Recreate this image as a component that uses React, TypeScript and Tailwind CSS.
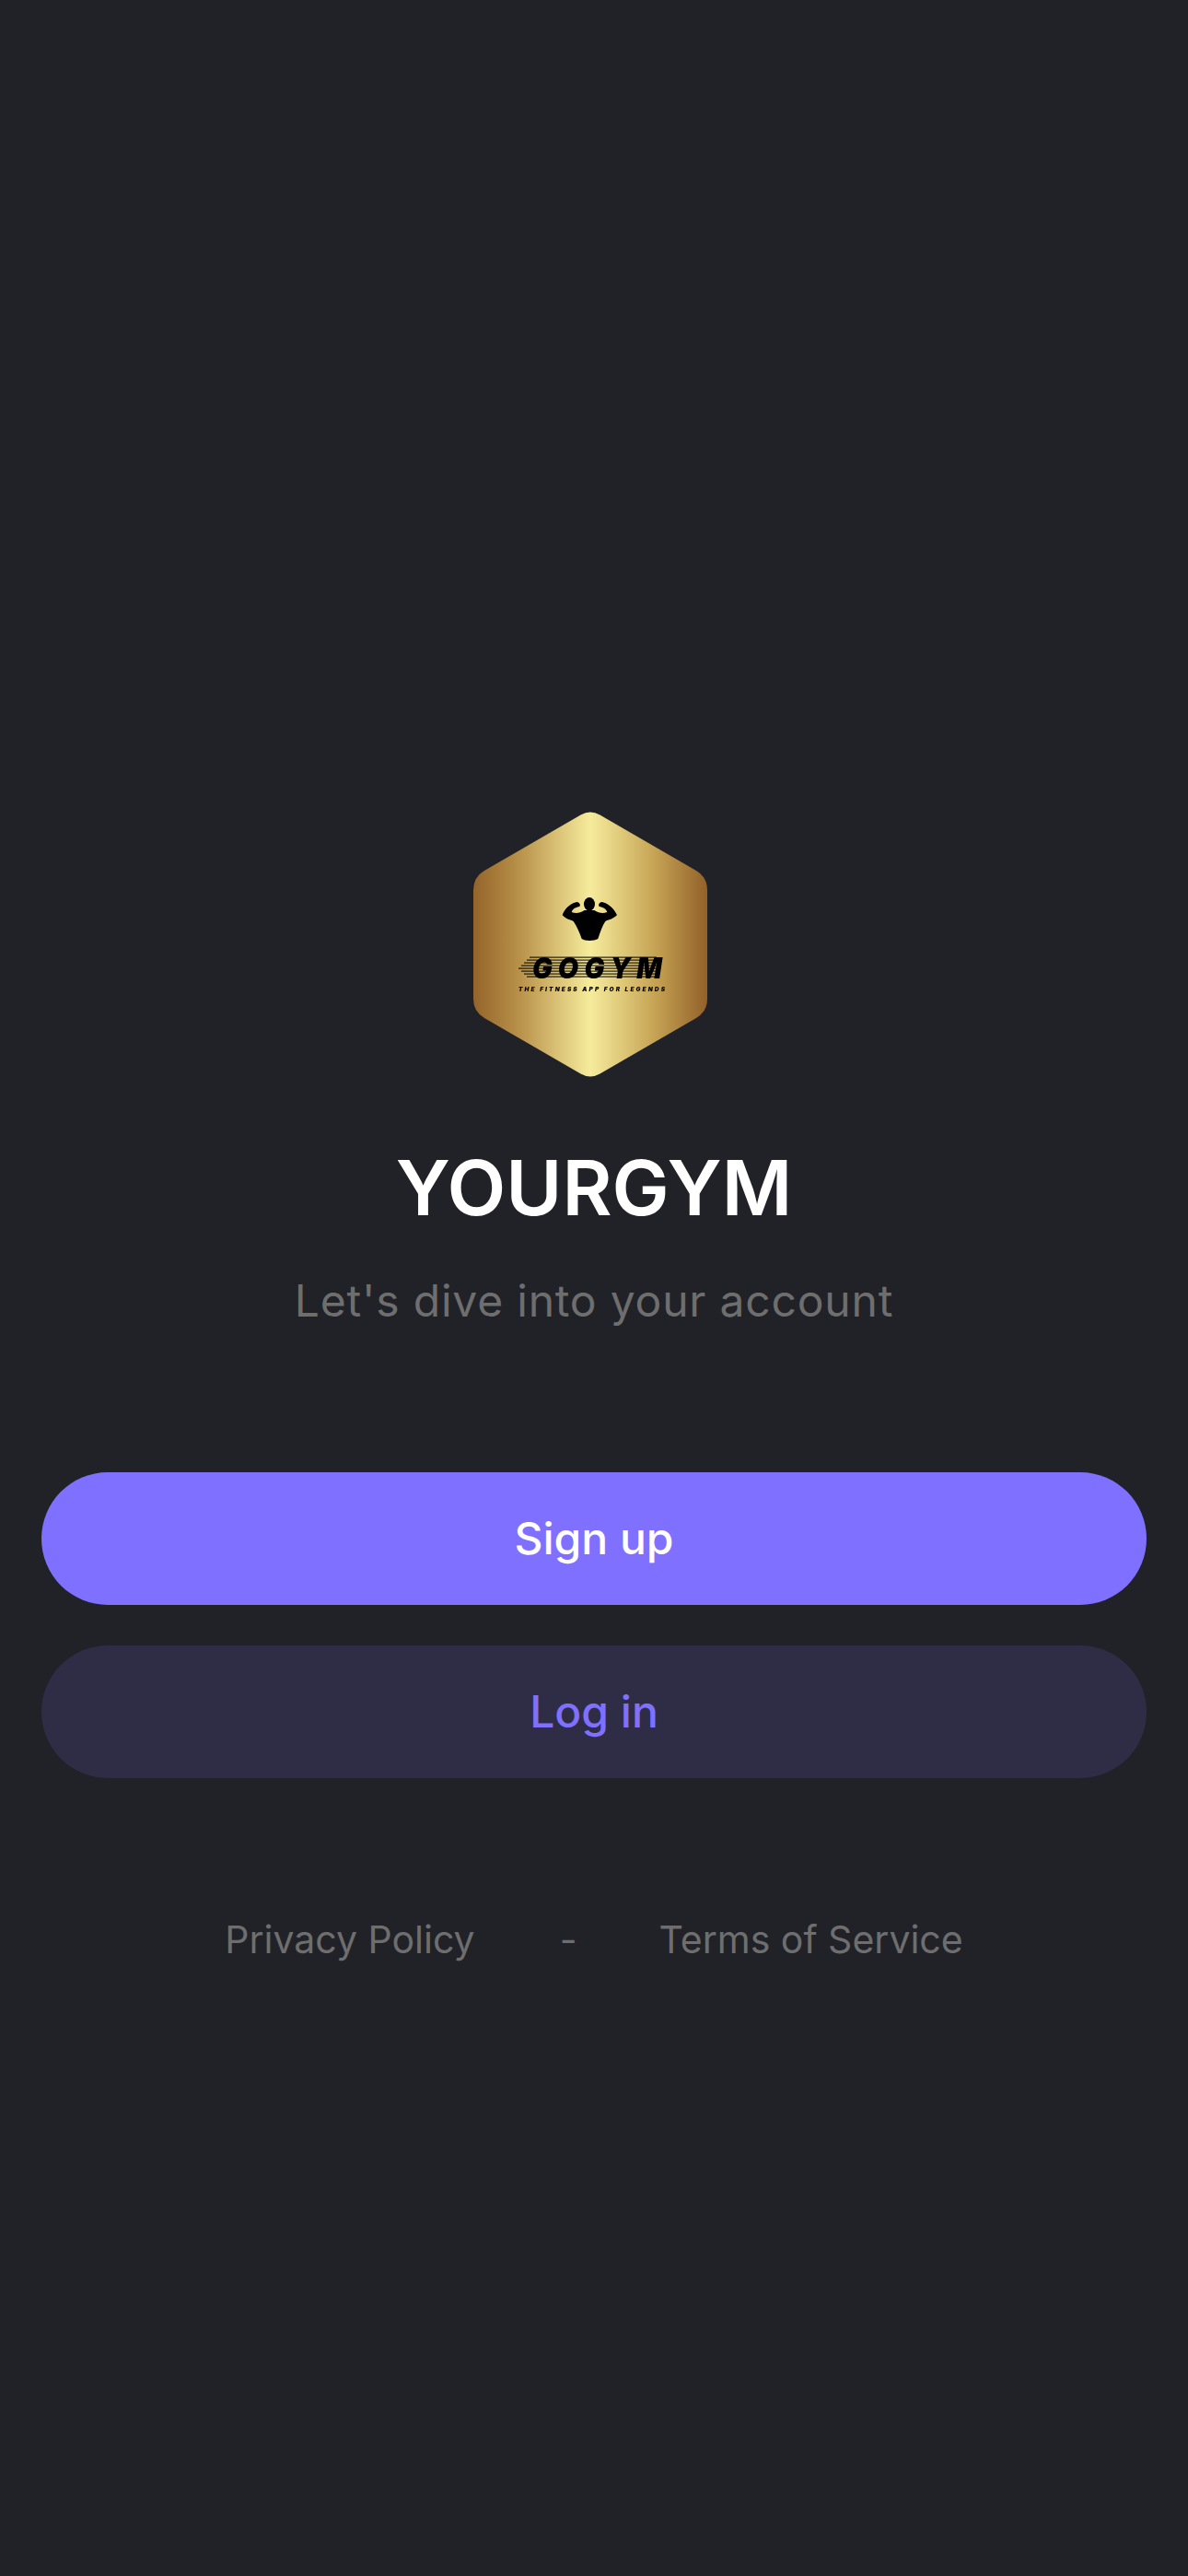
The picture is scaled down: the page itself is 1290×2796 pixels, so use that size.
const streaks = [0, 1, 2, 3, 4, 5, 6, 7]

const Logo = () => {
  return (
    <svg width="254" height="288" viewBox="0 0 254 288" className="mr-2 shrink-0">
      <defs>
        <linearGradient id="gold" x1="0" y1="0" x2="1" y2="0">
          <stop offset="0" stopColor="#94642a" />
          <stop offset="0.2" stopColor="#b9924a" />
          <stop offset="0.5" stopColor="#f6ec9c" />
          <stop offset="0.78" stopColor="#c5a253" />
          <stop offset="1" stopColor="#92612a" />
        </linearGradient>
        <filter id="soft">
          <feGaussianBlur stdDeviation="0.35" />
        </filter>
      </defs>
      <path
        d="M116.6 3.5 Q127 -2.5 137.4 3.5 L242 64 Q254 71 254 85 L254 203 Q254 217 242 224 L137.4 284.5 Q127 290.5 116.6 284.5 L12 224 Q0 217 0 203 L0 85 Q0 71 12 64 Z"
        fill="url(#gold)"
      />
      <g filter="url(#soft)">
        {/* bodybuilder */}
        <g transform="translate(36 79) scale(0.3333)" fill="#000">
          <ellipse cx="270" cy="64" rx="18" ry="22" />
          <path d="M182 100 C188 82 205 62 230 57 C238 58 242 66 238 72 C226 74 216 78 212 90 C224 95 240 94 254 84 L286 84 C300 94 316 95 328 90 C324 78 314 74 302 72 C298 66 302 58 310 57 C335 62 352 82 360 100 C345 114 332 115 322 120 C312 135 305 155 298 177 C285 185 255 185 245 177 C238 155 228 135 218 120 C208 115 195 114 182 100 Z" />
        </g>
        {/* speed lines */}
        {streaks.map((i) => (
          <rect key={i} x={49 + Math.abs(i - 4) * 3} y={157.5 + i * 3} width={150 - Math.abs(i - 4) * 3} height="1.2" fill="#000" opacity="0.85" />
        ))}
        <g transform="scale(0.9 1)">
          <text
            x="71 102 134 165 197"
            y="181"
            fontFamily="Inter, sans-serif"
            fontSize="32"
            fontWeight="900"
            fontStyle="italic"
            fill="#000"
          >
            GOGYM
          </text>
        </g>
        <text
          x="49"
          y="195"
          textLength="159"
          fontFamily="Inter, sans-serif"
          fontSize="6.5"
          fontWeight="900"
          fontStyle="italic"
          fill="#000"
        >
          THE FITNESS APP FOR LEGENDS
        </text>
      </g>
    </svg>
  )
}

const App = () => {
  return (
    <div className="flex flex-col items-center min-h-[2796px] bg-[#212227] pt-[881px] px-[45px] font-['Inter',sans-serif]">
      <Logo />

      <h1 className="mt-[70px] text-[83px] leading-[100px] font-semibold text-white">YOURGYM</h1>
      <p className="mt-[41px] text-[48px] leading-[64px] tracking-[0.8px] text-[#6e6e6e]">Let's dive into your account</p>

      <div className="flex flex-col gap-[44px] w-full mt-[154px]">
        <button className="h-[144px] rounded-full bg-[#7f70ff] text-[48px] font-medium text-white">Sign up</button>
        <button className="h-[144px] rounded-full bg-[#2f2d45] text-[48px] font-medium text-[#7f70ff]">Log in</button>
      </div>

      <div className="flex items-center gap-[89px] mt-[147px] text-[41px] leading-[56px] text-[#6e6e6e]">
        <span>Privacy Policy</span>
        <span className="ml-[3px]">-</span>
        <span>Terms of Service</span>
      </div>
    </div>
  )
}
export default App
